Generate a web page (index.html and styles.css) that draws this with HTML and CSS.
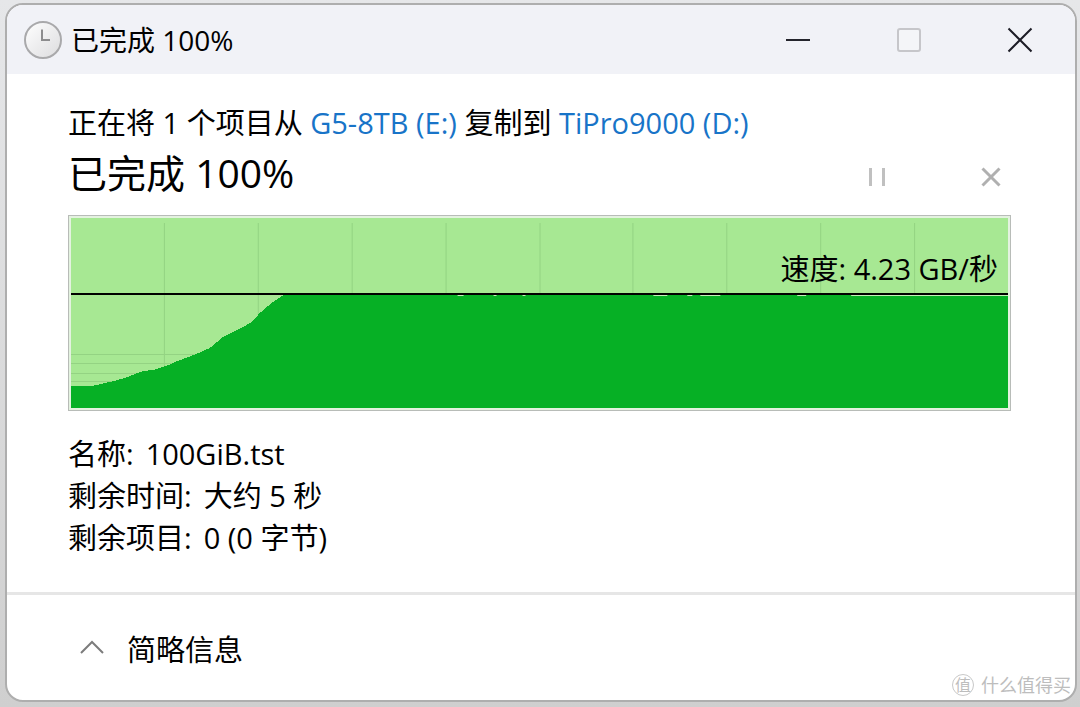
FILE: index.html
```html
<!DOCTYPE html>
<html lang="zh-CN">
<head>
    <meta charset="UTF-8">
    <meta name="viewport" content="width=device-width, initial-scale=1.0">
    <title>已完成 100%</title>
    <link rel="stylesheet" href="styles.css">
</head>
<body>
    <div class="window">
        <header class="titlebar">
            <svg class="clock" viewBox="0 0 38 38" aria-hidden="true">
                <defs>
                    <linearGradient id="face" x1="0" y1="0" x2="1" y2="1">
                        <stop offset="0" stop-color="#ffffff"/>
                        <stop offset="1" stop-color="#dcdcde"/>
                    </linearGradient>
                </defs>
                <circle cx="19" cy="19" r="18" fill="url(#face)" stroke="#a9a9ab" stroke-width="2"/>
                <path d="M18 8.500V19h8" fill="none" stroke="#8c8c8e" stroke-width="2"/>
            </svg>
            <h1 class="title">已完成 100%</h1>
            <div class="window-buttons">
                <button type="button" aria-label="最小化">
                    <svg width="26" height="26" viewBox="0 0 26 26"><path d="M1 13h24" stroke="#24242c" stroke-width="2"/></svg>
                </button>
                <button type="button" aria-label="最大化" disabled>
                    <svg width="26" height="26" viewBox="0 0 26 26"><rect x="2" y="2" width="22" height="22" rx="2" fill="#f4f5f8" stroke="#c6c6ca" stroke-width="2"/></svg>
                </button>
                <button type="button" aria-label="关闭">
                    <svg width="26" height="26" viewBox="0 0 26 26"><path d="M1.500 1.500l23 23M24.500 1.500l-23 23" stroke="#1c1c26" stroke-width="2"/></svg>
                </button>
            </div>
        </header>

        <main class="content">
            <p class="source">正在将 1 个项目从 <a href="#">G5-8TB (E:)</a> 复制到 <a href="#">TiPro9000 (D:)</a></p>
            <div class="status">
                <h2>已完成 100%</h2>
                <div class="actions">
                    <button type="button" aria-label="暂停" disabled>
                        <svg width="20" height="20" viewBox="0 0 20 20"><path d="M3.500 1v18M16.500 1v18" stroke="#c0c0c0" stroke-width="3"/></svg>
                    </button>
                    <button type="button" aria-label="取消" disabled>
                        <svg width="20" height="20" viewBox="0 0 20 20"><path d="M1.500 1.500l17 17M18.500 1.500l-17 17" stroke="#b0b0b0" stroke-width="3"/></svg>
                    </button>
                </div>
            </div>

            <div class="chart">
                <svg viewBox="0 0 938 190" preserveAspectRatio="none" shape-rendering="crispEdges" aria-hidden="true">
                    <rect width="938" height="190" fill="#a7e893"/>
                    <!-- grid -->
                    <path d="M93.500 5V190M187.500 5V190M281.500 5V190M375.500 5V190M469.500 5V190M562.500 5V190M656.500 5V190M750.500 5V190M844.500 5V190" stroke="#94d383"/>
                    <path d="M0 136.500H938M0 145.500H938M0 155.500H938M0 163.500H938" stroke="#94d383"/>
                    <!-- transfer speed -->
                    <path d="M0 190V168H20L26 167L34 165L44 163L50 161L57 159L64 156L72 153L82 152L92 149L98 147L104 144L112 141L120 138L130 134L139 130L145 125L152 119L162 114L172 109L181 104L189 95L196 89L202 84L213 77H938V190Z" fill="#06b025"/>
                    <path d="M387 77.500h6M423 77.500h3M452 77.500h3M583 77.500h14M617 77.500h5M630 77.500h20M727 77.500h9M781 77.500h157" stroke="#c4efb8"/>
                    <path d="M0 76H938" stroke="#000" stroke-width="2"/>
                </svg>
                <span class="speed">速度: 4.23 GB/秒</span>
            </div>

            <dl class="details">
                <div><dt>名称:</dt><dd>100GiB.tst</dd></div>
                <div><dt>剩余时间:</dt><dd>大约 5 秒</dd></div>
                <div><dt>剩余项目:</dt><dd>0 (0 字节)</dd></div>
            </dl>
        </main>

        <footer class="footer">
            <button type="button" class="toggle">
                <svg width="26" height="16" viewBox="0 0 26 16" aria-hidden="true"><path d="M2 13L13 2l11 11" fill="none" stroke="#7c7c7c" stroke-width="2"/></svg>
                简略信息
            </button>
        </footer>

        <div class="watermark">
            <span class="badge">值</span>
            <span>什么值得买</span>
        </div>
    </div>
</body>
</html>
```
FILE: styles.css
```css
* {
    box-sizing: border-box;
}

body {
    margin: 0;
    padding: 3px 3px 5px 5px;
    min-height: 100vh;
    display: flex;
    background: linear-gradient(#e6e7e9, #cfcfcf);
    font-family: "Open Sans", "Noto Sans CJK SC", sans-serif;
    font-size: 29px;
    font-weight: 400;
    color: #000;
}

h1, h2, p, dl, dd {
    margin: 0;
    font-weight: inherit;
}

button {
    border: 0;
    padding: 0;
    background: none;
    font: inherit;
    color: inherit;
}

svg {
    display: block;
}

a {
    color: #1874c8;
    text-decoration: none;
}

.window {
    flex: 1;
    position: relative;
    display: flex;
    flex-direction: column;
    border: 2px solid #aeaeae;
    border-radius: 18px;
    background: #fff;
    overflow: hidden;
}

/* title bar */
.titlebar {
    display: flex;
    align-items: center;
    height: 69px;
    padding-left: 17px;
    background: #f1f2f7;
}

.clock {
    width: 38px;
    height: 38px;
}

.title {
    margin-left: 9px;
    font-size: 28px;
    line-height: 40px;
}

.window-buttons {
    display: flex;
    margin-left: auto;
    height: 100%;
}

.window-buttons button {
    display: flex;
    align-items: center;
    justify-content: center;
    width: 111px;
}

/* content */
.content {
    padding: 29px 64px 33px 61px;
}

.source {
    line-height: 40px;
}

.status {
    display: flex;
    align-items: center;
    justify-content: space-between;
}

.status h2 {
    font-size: 39px;
    line-height: 60px;
}

.actions {
    display: flex;
    gap: 74px;
    padding-top: 8px;
}

.actions button {
    display: flex;
    align-items: center;
    justify-content: center;
    width: 40px;
    height: 40px;
}

.chart {
    position: relative;
    margin-top: 12px;
    padding: 2px;
    border: 1px solid #b8bcb8;
    background: #e4f2e0;
}

.chart svg {
    width: 100%;
    height: 190px;
}

.speed {
    position: absolute;
    top: 33px;
    right: 12px;
    line-height: 40px;
}

.details {
    margin-top: 22px;
    line-height: 42px;
}

.details div {
    display: flex;
    gap: 12px;
}

/* footer */
.footer {
    flex: 1;
    display: flex;
    align-items: center;
    padding-left: 72px;
    border-top: 3px solid #e6e6e6;
}

.toggle {
    display: flex;
    align-items: center;
    gap: 22px;
}

.watermark {
    position: absolute;
    right: 4px;
    bottom: 3px;
    display: flex;
    align-items: center;
    gap: 7px;
    font-size: 18px;
    line-height: 24px;
    color: #bdbdbd;
}

.badge {
    width: 22px;
    height: 22px;
    border: 1px solid #c8c8c8;
    border-radius: 50%;
    font-size: 16px;
    line-height: 20px;
    text-align: center;
}
```
